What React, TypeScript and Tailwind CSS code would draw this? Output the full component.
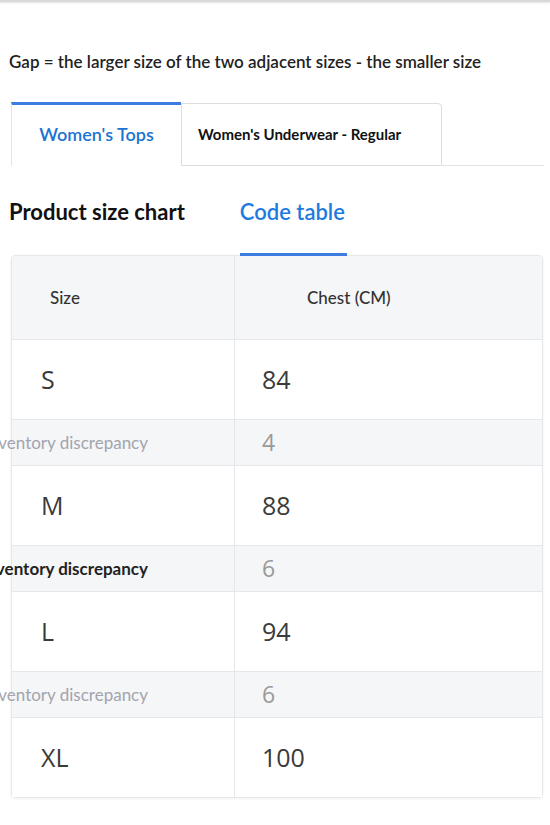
import * as React from 'react'

type Row = {size: string; chest: string; gap?: {value: string; strong?: boolean}}

const rows: Row[] = [
  {size: 'S', chest: '84', gap: {value: '4'}},
  {size: 'M', chest: '88', gap: {value: '6', strong: true}},
  {size: 'L', chest: '94', gap: {value: '6'}},
  {size: 'XL', chest: '100'},
]

const lato = "font-['Lato','Liberation_Sans',sans-serif]"
const value = "font-['Open_Sans','Noto_Sans',sans-serif]"

const SizeRow: React.FC<{row: Row}> = ({row}) => {
  return (
    <>
      <div className="grid h-[80px] grid-cols-[223px_1fr] border-t border-[#e6e7ea] bg-white">
        <div className={`flex items-center border-r border-[#e6e7ea] pl-[29px] text-[25px] text-[#3a3a3a] ${value}`}>
          {row.size}
        </div>
        <div className={`flex items-center pl-[27px] text-[25px] text-[#3a3a3a] ${value}`}>
          {row.chest}
        </div>
      </div>
      {row.gap && (
        <div className="grid h-[46px] grid-cols-[223px_1fr] border-t border-[#e6e7ea] bg-[#f5f6f8]">
          <div className="flex items-center border-r border-[#e6e7ea]">
            {/* label is wider than the box and spills past the left edge, like the original */}
            <div
              className={`flex w-[136px] justify-end whitespace-nowrap text-[17px] ${lato} ${
                row.gap.strong ? 'font-bold text-[#222]' : 'text-[#a3a4ad]'
              }`}
            >
              Inventory discrepancy
            </div>
          </div>
          <div className={`flex items-center pl-[27px] text-[23px] text-[#9a9a9a] ${value}`}>
            {row.gap.value}
          </div>
        </div>
      )}
    </>
  )
}

export default function App() {
  return (
    <div className={`min-h-[825px] w-[550px] bg-white ${lato}`}>
      <div className="h-[2px] bg-[#d9d9d9] shadow-[0_1px_2px_rgba(0,0,0,0.12)]" />

      <p className="mt-[48px] pl-[9px] text-[17px] font-semibold leading-6 text-[#222]">
        Gap = the larger size of the two adjacent sizes - the smaller size
      </p>

      <div className="mt-[28px] ml-[11px] mr-[6px] flex items-end">
        <div className="flex h-[64px] w-[170px] items-center justify-center border-t-[3px] border-l border-t-[#3c7de2] border-l-[#e4e4e6] pb-[3px] text-[18px] font-semibold text-[#1c74d2]">
          Women&apos;s Tops
        </div>
        <div className="flex h-[63px] w-[261px] items-center rounded-tr-[4px] border border-[#dcdde0] pl-[16px] text-[15px] font-bold text-[#111]">
          Women&apos;s Underwear - Regular
        </div>
        <div className="flex-1 border-b border-[#e2e3e5]" />
      </div>

      <div className="mt-[31px] flex items-start">
        <div className="pl-[9px] text-[22px] font-bold leading-[30px] text-[#111]">
          Product size chart
        </div>
        <div className="relative z-10 ml-[55px] flex flex-col">
          <div className="text-[22px] font-semibold leading-[30px] text-[#1f7ae0]">Code table</div>
          <div className="mt-[26px] h-[3px] w-[107px] bg-[#3c7de2]" />
        </div>
      </div>

      <div className="mx-[11px] -mt-[1px] w-[532px] overflow-visible rounded-[4px] border border-[#e6e7ea] shadow-[0_1px_3px_rgba(0,0,0,0.06)]">
        <div className="grid h-[83px] grid-cols-[223px_1fr] rounded-t-[4px] bg-[#f5f6f8]">
          <div className="flex items-center border-r border-[#e6e7ea] pl-[38px] text-[17px] font-medium text-[#333]">
            Size
          </div>
          <div className="flex items-center pl-[72px] text-[17px] font-medium text-[#333]">
            Chest (CM)
          </div>
        </div>
        {rows.map((row, i) => (
          <SizeRow key={i} row={row} />
        ))}
      </div>
    </div>
  )
}
